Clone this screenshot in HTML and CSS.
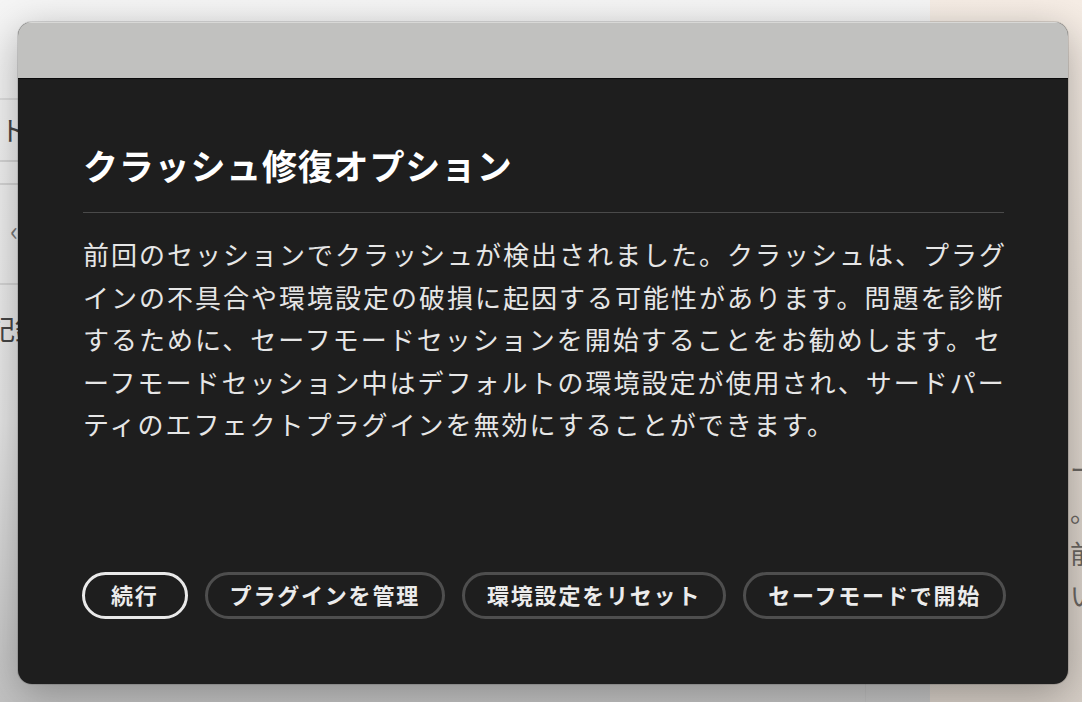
FILE: index.html
```html
<!DOCTYPE html>
<html lang="ja">
<head>
  <meta charset="UTF-8">
  <meta name="viewport" content="width=device-width, initial-scale=1.0">
  <title>クラッシュ修復オプション</title>
  <link rel="stylesheet" href="styles.css">
</head>
<body>

  <!-- app behind the dialog -->
  <div class="app">
    <div class="main">
      <div class="toolbar"></div>
      <div class="workspace">
        <div class="list">
          <div class="row row-head"></div>
          <div class="row">トラック</div>
          <div class="row row-thin"></div>
          <div class="row row-tall"><span class="chevron">‹</span></div>
          <div class="row row-cut">記録</div>
        </div>
        <div class="inspector"></div>
      </div>
    </div>
    <div class="side">
      <p class="side-text">ーー<br>。。<br>前回<br>い</p>
    </div>
  </div>

  <div class="dialog">
    <div class="titlebar"></div>
    <div class="content">
      <h1 class="title">クラッシュ修復オプション</h1>
      <hr class="divider">
      <p class="message">前回のセッションでクラッシュが検出されました。クラッシュは、プラグインの不具合や環境設定の破損に起因する可能性があります。問題を診断するために、セーフモードセッションを開始することをお勧めします。セーフモードセッション中はデフォルトの環境設定が使用され、サードパーティのエフェクトプラグインを無効にすることができます。</p>

      <div class="actions">
        <button type="button" class="btn btn-primary">続行</button>
        <button type="button" class="btn">プラグインを管理</button>
        <button type="button" class="btn">環境設定をリセット</button>
        <button type="button" class="btn">セーフモードで開始</button>
      </div>
    </div>
  </div>

</body>
</html>
```

FILE: styles.css
```css
body {
  margin: 0;
  height: 702px;
  overflow: hidden;
  font-family: "Noto Sans CJK JP", "Noto Sans", sans-serif;
}

.app {
  display: flex;
  height: 100%;
}

.main {
  width: 930px;
  display: flex;
  flex-direction: column;
  background: linear-gradient(#f5f5f5, #e6e6e6 60%, #c2c2c2);
}

.toolbar {
  height: 60px;
}

.workspace {
  flex: 1;
  display: flex;
}

.list {
  flex: 1;
}

.row {
  height: 60px;
  border-bottom: 2px solid #d4d4d4;
  padding-left: 0;
  font-size: 27px;
  line-height: 60px;
  color: #454545;
  white-space: nowrap;
}

.row-head {
  height: 38px;
  border-bottom-color: #dddddd;
}

.row-thin {
  height: 21px;
}

.row-tall {
  height: 98px;
  line-height: 90px;
}

.row-cut {
  border-bottom: none;
  margin-left: -12px;
  line-height: 88px;
}

.chevron {
  padding-left: 10px;
  color: #777;
}

.inspector {
  width: 64px;
  border-left: 1px solid #bdbdbd;
}

.side {
  flex: 1;
  background: linear-gradient(#f6ede5, #e6ddd4 40%, #d6cec6);
  overflow: hidden;
}

.side-text {
  margin: 448px 0 0 140px;
  font-size: 26px;
  line-height: 42px;
  color: #6a6662;
  white-space: nowrap;
}

.dialog {
  position: absolute;
  left: 18px;
  top: 22px;
  width: 1050px;
  height: 662px;
  box-sizing: border-box;
  display: flex;
  flex-direction: column;
  border-radius: 14px;
  overflow: hidden;
  background-color: #1e1e1e;
  box-shadow: 0 0 0 1px rgba(0, 0, 0, 0.12), 0 10px 40px rgba(0, 0, 0, 0.3);
}

.titlebar {
  flex-shrink: 0;
  height: 57px;
  background-color: #c1c1bf;
  border-top: 1px solid #d8d8d6;
  box-sizing: border-box;
  border-bottom: 1px solid #0b0b0b;
}

.content {
  flex: 1;
  display: flex;
  flex-direction: column;
  padding: 62px 64px 65px 65px;
}

.title {
  margin: 0;
  font-size: 35px;
  line-height: 48px;
  font-weight: 700;
  letter-spacing: 0.8px;
  color: #ffffff;
}

.divider {
  margin: 23px 0 0;
  height: 1px;
  border: none;
  background-color: #4a4a4a;
}

.message {
  margin: 20px -8px 0 0;
  font-size: 26px;
  line-height: 42.5px;
  letter-spacing: 2px;
  color: #e6e6e6;
  line-break: loose;
}

.actions {
  margin-top: auto;
  display: flex;
  gap: 17px;
  margin-left: -1px;
}

.btn {
  flex-shrink: 0;
  height: 47px;
  padding: 0 22px 3px;
  border: 3px solid #4e4e4e;
  border-radius: 24px;
  background: transparent;
  color: #ececec;
  font-family: "Noto Sans CJK JP", "Noto Sans", sans-serif;
  font-size: 22px;
  font-weight: 700;
  letter-spacing: 1.8px;
  white-space: nowrap;
  cursor: pointer;
}

.btn-primary {
  padding: 0 26px 3px;
  border-color: #e9e9e9;
}
```
